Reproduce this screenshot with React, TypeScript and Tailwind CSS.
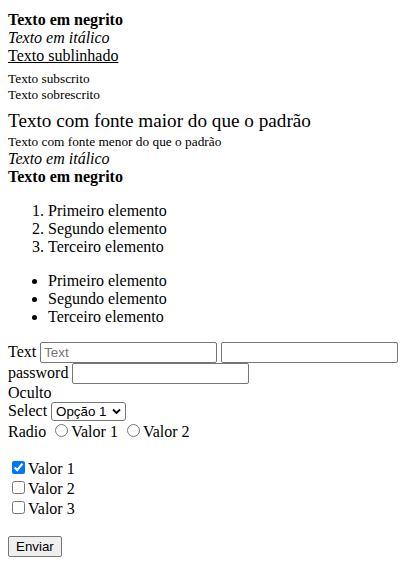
import React from "react";

const ctrlFont = "font-['Liberation_Sans',Arial,sans-serif] text-[13.33px] leading-[normal]";

export default function App() {
  return (
    <div className="mx-2 mt-[11px] mb-2 bg-white text-black font-['Liberation_Serif','Times_New_Roman',serif] text-[16px] leading-[normal]">
      <b>Texto em negrito</b>
      <br />
      <i>Texto em itálico</i>
      <br />
      <u>Texto sublinhado</u>
      <br />
      <sub className="static align-sub text-[13.33px] leading-[normal]">Texto subscrito</sub>
      <br />
      <sup className="static align-super text-[13.33px] leading-[normal]">Texto sobrescrito</sup>
      <br />
      <span className="text-[19.2px]">Texto com fonte maior do que o padrão</span>
      <br />
      <small className="text-[13.33px]">Texto com fonte menor do que o padrão</small>
      <br />
      <em>Texto em itálico</em>
      <br />
      <strong>Texto em negrito</strong>
      <ol className="my-4 list-decimal pl-10">
        <li>Primeiro elemento</li>
        <li>Segundo elemento</li>
        <li>Terceiro elemento</li>
      </ol>
      <ul className="my-4 list-disc pl-10">
        <li>Primeiro elemento</li>
        <li>Segundo elemento</li>
        <li>Terceiro elemento</li>
      </ul>
      <form onSubmit={(e) => e.preventDefault()}>
        <label>Text </label>
        <input
          type="text"
          placeholder="Text"
          className={`${ctrlFont} w-[177px] h-[21px] rounded-[2px] border border-[#767676] px-[3px] py-[2px] placeholder:text-[#757575]`}
        />{" "}
        <input
          type="text"
          className={`${ctrlFont} w-[177px] h-[21px] rounded-[2px] border border-[#767676] px-[3px] py-[2px]`}
        />
        <br />
        <label>password </label>
        <input
          type="password"
          className={`${ctrlFont} w-[177px] h-[21px] rounded-[2px] border border-[#767676] px-[3px] py-[2px]`}
        />
        <br />
        <label>Oculto </label>
        <input type="hidden" />
        <br />
        <label>Select </label>
        <span className="relative inline-block align-baseline">
          <select
            defaultValue="1"
            className={`${ctrlFont} appearance-none w-[75px] h-[19px] rounded-[3px] border border-[#767676] pl-[4px] pr-[18px] text-black`}
          >
            <option value="1">Opção 1</option>
          </select>
          <svg
            className="pointer-events-none absolute right-[5px] top-[6px]"
            width="9"
            height="7"
            viewBox="0 0 9 7"
          >
            <path d="M1 1.5 L4.5 5 L8 1.5" fill="none" stroke="#000" strokeWidth="1.8" />
          </svg>
        </span>
        <br />
        <label>Radio </label>
        <input type="radio" name="r" className="m-[3px_3px_0px_5px]" />
        Valor 1 <input type="radio" name="r" className="m-[3px_3px_0px_5px]" />
        Valor 2
        <p className="mt-[17px] mb-4">
          <input type="checkbox" defaultChecked className="m-[3px_3px_3px_4px]" />
          Valor 1
          <br />
          <input type="checkbox" className="m-[3px_3px_3px_4px]" />
          Valor 2
          <br />
          <input type="checkbox" className="m-[3px_3px_3px_4px]" />
          Valor 3
        </p>
        <p className="mt-[18px] mb-4">
          <button
            type="submit"
            className={`${ctrlFont} h-[21px] rounded-[2px] border border-[#767676] bg-[#efefef] px-[7px] py-[2px] text-black`}
          >
            Enviar
          </button>
        </p>
      </form>
    </div>
  );
}
